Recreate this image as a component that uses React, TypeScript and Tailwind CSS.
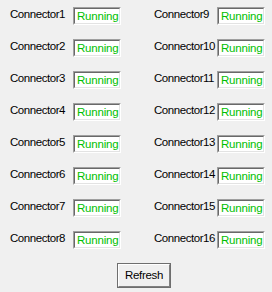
const rows = [1, 2, 3, 4, 5, 6, 7, 8];

function StatusBox() {
  return (
    <div className="h-[18px] w-[48px] border border-t-[#a0a0a0] border-l-[#a0a0a0] border-b-white border-r-white">
      <div className="flex h-full w-full items-center border border-t-[#696969] border-l-[#696969] border-b-[#e3e3e3] border-r-[#e3e3e3] bg-white pl-[2px] pt-[1px] text-[11.5px] leading-none tracking-[-0.2px] text-[#00c000]">
        Running
      </div>
    </div>
  );
}

function Item({ n }: { n: number }) {
  return (
    <div className="flex h-[18px] items-center">
      <span className="w-[63px] -translate-y-[1px] whitespace-nowrap text-[11.5px] tracking-[-0.45px] text-black">
        Connector{n}
      </span>
      <StatusBox />
    </div>
  );
}

export default function App() {
  return (
    <div
      className="flex h-[292px] w-[272px] flex-col bg-[#f0f0f0] pl-[10px] pt-[7px]"
      style={{ fontFamily: '"Liberation Sans", Arial, sans-serif' }}
    >
      <div className="grid grid-cols-[111px_111px] gap-x-[33px] gap-y-[14px]">
        {rows.map((n) => (
          <div key={n} className="contents">
            <Item n={n} />
            <Item n={n + 8} />
          </div>
        ))}
      </div>
      <div className="mt-[14px] flex justify-center pl-[6px]">
        <button className="h-[25px] w-[54px] border border-[#6e6e6e] bg-[#f0f0f0] p-0">
          <div className="flex h-full w-full items-center justify-center border border-t-white border-l-white border-b-[#808080] border-r-[#808080] text-[11.5px] tracking-[-0.3px] text-black">
            Refresh
          </div>
        </button>
      </div>
    </div>
  );
}
